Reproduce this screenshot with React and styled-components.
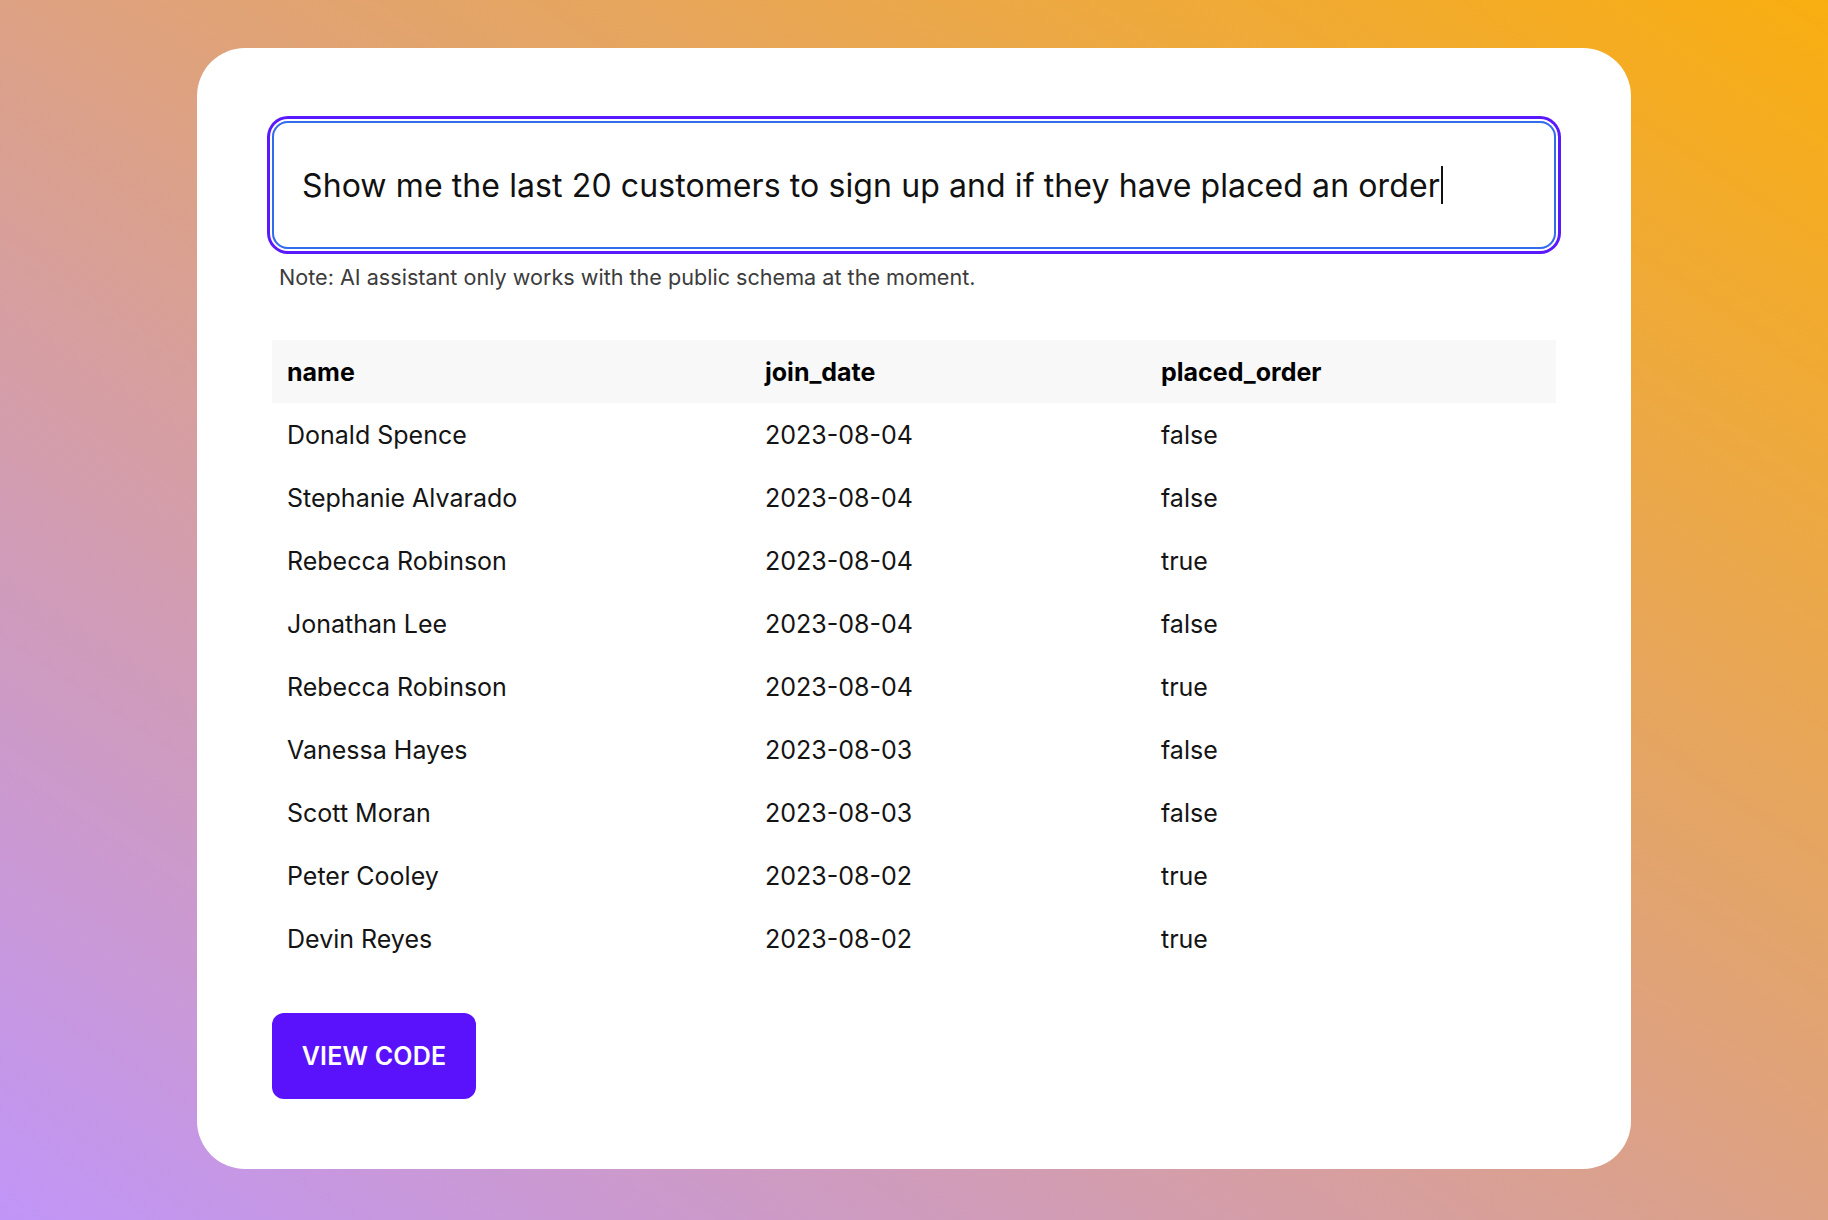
import React from 'react'
import styled, { createGlobalStyle } from 'styled-components'

const GlobalStyle = createGlobalStyle`
  html, body {
    margin: 0;
    padding: 0;
  }
  body {
    font-family: Inter, "Noto Sans", "Liberation Sans", sans-serif;
    -webkit-font-smoothing: antialiased;
  }
  * {
    box-sizing: border-box;
  }
`

const Page = styled.div`
  min-height: 100vh;
  display: flex;
  justify-content: center;
  align-items: flex-start;
  padding: 48px 0 51px;
  background: linear-gradient(to top right, #c195f8 0%, #f9ae10 100%);
`

const Card = styled.div`
  width: 1434px;
  background: #ffffff;
  border-radius: 48px;
  padding: 73px 75px 70px 75px;
`

const PromptBox = styled.div`
  height: 128px;
  display: flex;
  align-items: center;
  padding: 0 28px;
  border: 2px solid #316cec;
  border-radius: 16px;
  box-shadow: 0 0 0 2px #ffffff, 0 0 0 5px #5a18fc;
  font-size: 32px;
  color: #111111;
  letter-spacing: 0.1px;
`

const Caret = styled.span`
  display: inline-block;
  width: 2px;
  height: 38px;
  margin-left: 1px;
  background: #111111;
`

const Note = styled.p`
  margin: 13px 0 0 7px;
  font-size: 21.6px;
  line-height: 30px;
  color: #3c3c3c;
`

const Table = styled.div`
  margin-top: 48px;
  display: flex;
  flex-direction: column;
`

const Row = styled.div`
  display: grid;
  grid-template-columns: 478px 396px 1fr;
  height: 63px;
  align-items: center;
  background: ${({ head }) => (head ? '#f8f8f8' : 'transparent')};
`

const Cell = styled.div`
  padding-left: 15px;
  font-size: 25px;
  font-weight: ${({ head }) => (head ? 700 : 400)};
  color: ${({ head }) => (head ? '#000000' : '#141414')};
`

const Button = styled.button`
  margin-top: 43px;
  width: 204px;
  height: 86px;
  border: none;
  border-radius: 12px;
  background: #5a12fd;
  color: #ffffff;
  font-family: Inter, "Noto Sans", "Liberation Sans", sans-serif;
  font-size: 25px;
  font-weight: 600;
  letter-spacing: 0.2px;
  text-transform: uppercase;
  cursor: pointer;
`

const rows = [
  ['Donald Spence', '2023-08-04', 'false'],
  ['Stephanie Alvarado', '2023-08-04', 'false'],
  ['Rebecca Robinson', '2023-08-04', 'true'],
  ['Jonathan Lee', '2023-08-04', 'false'],
  ['Rebecca Robinson', '2023-08-04', 'true'],
  ['Vanessa Hayes', '2023-08-03', 'false'],
  ['Scott Moran', '2023-08-03', 'false'],
  ['Peter Cooley', '2023-08-02', 'true'],
  ['Devin Reyes', '2023-08-02', 'true'],
]

const App = () => (
  <>
    <GlobalStyle />
    <Page>
      <Card>
        <PromptBox>
          Show me the last 20 customers to sign up and if they have placed an order
          <Caret />
        </PromptBox>
        <Note>Note: AI assistant only works with the public schema at the moment.</Note>
        <Table>
          <Row head>
            <Cell head>name</Cell>
            <Cell head>join_date</Cell>
            <Cell head>placed_order</Cell>
          </Row>
          {rows.map(([name, date, placed], i) => (
            <Row key={i}>
              <Cell>{name}</Cell>
              <Cell>{date}</Cell>
              <Cell>{placed}</Cell>
            </Row>
          ))}
        </Table>
        <Button>View code</Button>
      </Card>
    </Page>
  </>
)

export default App
